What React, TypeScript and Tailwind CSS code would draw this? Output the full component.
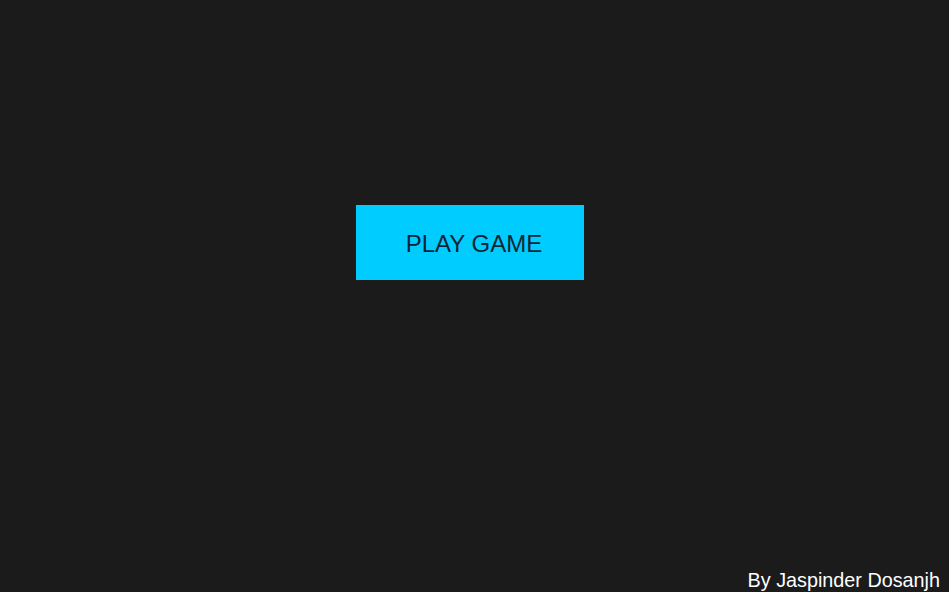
export default function App() {
  return (
    <div
      className="flex h-[592px] w-full flex-col bg-[#1b1b1b]"
      style={{ fontFamily: '"Liberation Sans", Arial, sans-serif' }}
    >
      {/* Menu */}
      <div className="flex-1 pt-[205px]">
        <button className="ml-[356px] flex h-[75px] w-[228px] items-center justify-center bg-[#00ccff] pl-[8px] pt-[2px] text-[24px] leading-none text-[#0d2533]">
          PLAY GAME
        </button>
      </div>

      {/* Credit */}
      <div className="pr-[9px] text-right text-[19.8px] leading-[23px] text-white">
        By Jaspinder Dosanjh
      </div>
    </div>
  );
}
